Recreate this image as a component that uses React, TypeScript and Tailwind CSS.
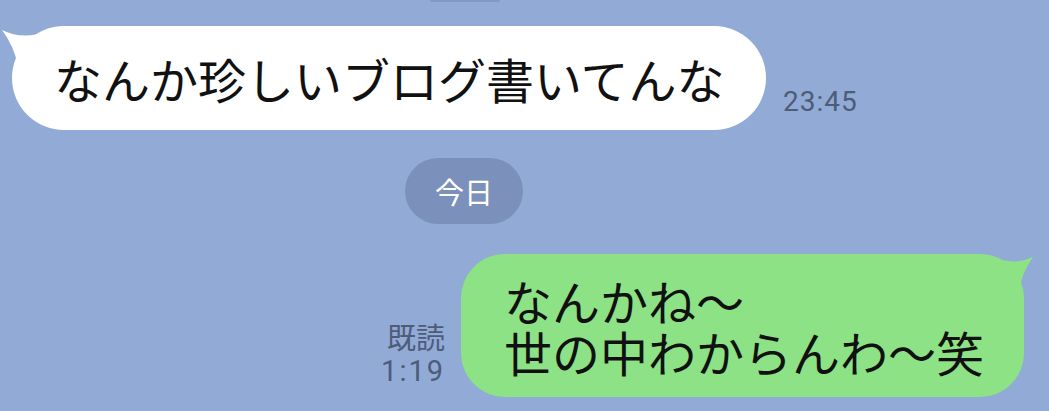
import React from "react";

const CJK = "font-['Noto_Sans_CJK_JP',sans-serif]";
const META = "font-['Roboto','Noto_Sans_CJK_JP',sans-serif]";

// bubble tail, drawn in the bubble's own corner coordinates
function Tail({ side, color }: { side: "left" | "right"; color: string }) {
  const path =
    side === "left"
      ? "M-10 4 Q6 12 24 8.5 L24 40 L6 40 Q2 20 -10 4 Z"
      : "M-9 3 Q6 10 22 6 L22 40 L6 40 Q2 18 -9 3 Z";
  return (
    <svg
      width={40}
      height={45}
      viewBox="-12 0 40 45"
      className={
        side === "left"
          ? "absolute left-[-12px] top-0 overflow-visible"
          : "absolute right-[-12px] top-0 overflow-visible -scale-x-100"
      }
    >
      <path d={path} fill={color} />
    </svg>
  );
}

export default function App() {
  return (
    <div className="w-full h-[411px] overflow-hidden bg-[#91aad6]">
      {/* previous date pill, cut off at the top */}
      <div className="ml-[430px] w-[70px] h-[2px] rounded-b-full bg-[#8399c4]" />

      {/* incoming message */}
      <div className="mt-[24px] pl-[12px] flex items-end">
        <div className="relative w-[754px] h-[104px] rounded-[52px] bg-white flex items-center pl-[42px]">
          <Tail side="left" color="#ffffff" />
          <span className={`${CJK} relative text-[48px] leading-none text-[#111111] whitespace-nowrap`}>
            なんか珍しいブログ書いてんな
          </span>
        </div>
        <div className={`${META} ml-[17px] mb-[14px] text-[28px] leading-none tracking-[1px] text-[#4e5c78]`}>
          23:45
        </div>
      </div>

      {/* date separator */}
      <div className="mt-[28px] ml-[405px] w-[118px] h-[66px] rounded-full bg-[#7b90bb] flex items-center justify-center">
        <span className={`${CJK} text-[29px] leading-none text-white`}>今日</span>
      </div>

      {/* outgoing message */}
      <div className="mt-[30px] pr-[25px] flex justify-end items-end">
        <div className={`${META} mr-[16px] mb-[10px] text-[29px] leading-[32px] text-right text-[#4e5c78]`}>
          <div>既読</div>
          <div className="tracking-[2px]">1:19</div>
        </div>
        <div className="relative w-[563px] h-[143px] rounded-[44px] bg-[#8de285] flex items-center pl-[43px]">
          <Tail side="right" color="#8de285" />
          <div className={`${CJK} relative text-[48px] leading-[51px] text-[#111111] whitespace-nowrap`}>
            <div>なんかね〜</div>
            <div>世の中わからんわ〜笑</div>
          </div>
        </div>
      </div>
    </div>
  );
}
